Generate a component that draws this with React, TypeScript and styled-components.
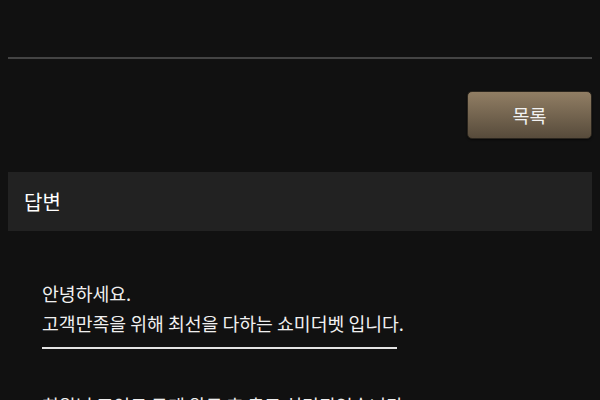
import React from 'react'
import styled, { createGlobalStyle } from 'styled-components'

const GlobalStyle = createGlobalStyle`
  html, body {
    margin: 0;
    padding: 0;
    background: #111111;
  }
  body {
    font-family: 'Noto Sans CJK KR', 'Noto Sans', sans-serif;
    color: #eeeeee;
  }
`

const Page = styled.div`
  width: 600px;
  height: 400px;
  overflow: hidden;
  padding: 57px 8px 0 8px;
  box-sizing: border-box;
`

const Divider = styled.hr`
  margin: 0;
  border: none;
  height: 2px;
  background: #444444;
`

const ButtonRow = styled.div`
  display: flex;
  justify-content: flex-end;
  padding: 32px 0 33px 0;
`

const ListButton = styled.button`
  width: 125px;
  height: 48px;
  border: 1px solid #2a251e;
  border-radius: 5px;
  background: linear-gradient(to bottom, #917e64, #574b3b);
  color: #f2f2f2;
  font-family: 'Noto Sans CJK KR', sans-serif;
  font-size: 18.5px;
  padding: 0;
  cursor: pointer;
  box-shadow: 0 1px 2px rgba(0, 0, 0, 0.6);
`

const AnswerHead = styled.div`
  height: 59px;
  background: #222222;
  display: flex;
  align-items: center;
  padding: 0 16px;
  font-size: 20px;
  color: #ffffff;
`

const AnswerBody = styled.div`
  padding: 47px 34px 0 34px;
  font-size: 18.3px;
  line-height: 30px;
  color: #f0f0f0;
`

const Line = styled.p`
  margin: 0;
`

const Rule = styled.div`
  width: 355px;
  height: 2px;
  margin: 9px 0 41px 0;
  background: #e4e4e4;
`

export default function App() {
  return (
    <>
      <GlobalStyle />
      <Page>
        <Divider />
        <ButtonRow>
          <ListButton>목록</ListButton>
        </ButtonRow>
        <AnswerHead>답변</AnswerHead>
        <AnswerBody>
          <Line>안녕하세요.</Line>
          <Line>고객만족을 위해 최선을 다하는 쇼미더벳 입니다.</Line>
          <Rule />
          <Line>회원님 포인트 구매 완료 후 출고 처리되었습니다.</Line>
        </AnswerBody>
      </Page>
    </>
  )
}
